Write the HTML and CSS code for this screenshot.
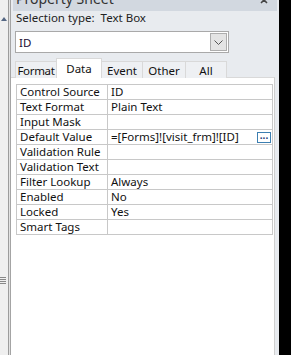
FILE: index.html
```html
<!DOCTYPE html>
<html lang="en">
<head>
    <meta charset="UTF-8">
    <title>Property Sheet</title>
    <link rel="stylesheet" href="styles.css">
</head>
<body>
    <div class="strip">
        <span class="arrow"></span>
        <span class="grip"><i></i><i></i><i></i><i></i></span>
    </div>
    <div class="edge"></div>
    <div class="sheet">
        <div class="titlebar">
            <span class="title">Property Sheet</span>
            <svg class="close" width="8" height="8" viewBox="0 0 8 8"><path d="M1 1 L7 7 M7 1 L1 7" stroke="#444" stroke-width="1.6"/></svg>
        </div>
        <div class="seltype">Selection type:&nbsp; Text Box</div>
        <div class="combo">
            <span class="combo-text">ID</span>
            <span class="drop"><svg width="9" height="5" viewBox="0 0 9 5"><path d="M0.5 0.5 L4.5 4.5 L8.5 0.5" fill="none" stroke="#555" stroke-width="1"/></svg></span>
        </div>
        <div class="tabs">
            <span class="tab tab-format">Format</span>
            <span class="tab tab-data active">Data</span>
            <span class="tab tab-event">Event</span>
            <span class="tab tab-other">Other</span>
            <span class="tab tab-all">All</span>
        </div>
        <div class="panel">
            <table class="grid">
                <tr><td class="name">Control Source</td><td>ID</td></tr>
                <tr><td class="name">Text Format</td><td>Plain Text</td></tr>
                <tr><td class="name">Input Mask</td><td></td></tr>
                <tr><td class="name">Default Value</td><td><div class="val"><span>=[Forms]![visit_frm]![ID]</span><span class="dots">...</span></div></td></tr>
                <tr><td class="name">Validation Rule</td><td></td></tr>
                <tr><td class="name">Validation Text</td><td></td></tr>
                <tr><td class="name">Filter Lookup</td><td>Always</td></tr>
                <tr><td class="name">Enabled</td><td>No</td></tr>
                <tr><td class="name">Locked</td><td>Yes</td></tr>
                <tr><td class="name">Smart Tags</td><td></td></tr>
            </table>
        </div>
    </div>
    <div class="void"></div>
</body>
</html>
```

FILE: styles.css
```css
body {
    margin: 0;
    height: 355px;
    overflow: hidden;
    display: flex;
    font-family: "Noto Sans", sans-serif;
    font-size: 11.5px;
    color: #111;
}
.strip {
    width: 8px;
    background: #efefef;
    display: flex;
    flex-direction: column;
    align-items: flex-start;
    padding-top: 17px;
    box-sizing: border-box;
}
.arrow {
    width: 0;
    height: 0;
    margin-left: 1px;
    border-left: 3px solid transparent;
    border-right: 3px solid transparent;
    border-bottom: 4px solid #556783;
}
.grip {
    margin-top: 256px;
    display: flex;
    flex-direction: column;
    gap: 1px;
}
.grip i {
    display: block;
    width: 6px;
    height: 1px;
    background: #888;
}
.edge {
    width: 1px;
    border-left: 1px solid #9c9c9c;
    border-right: 1px solid #a4a4a4;
    background: #e2e2e2;
}
.sheet {
    width: 268px;
    background: #e8ebef;
    display: flex;
    flex-direction: column;
}
.titlebar {
    height: 11px;
    margin: 0 2px;
    background: #d2d8e0;
    overflow: hidden;
    display: flex;
    justify-content: space-between;
}
.title {
    font-size: 14px;
    line-height: 14px;
    margin-top: -8px;
    margin-left: 3px;
    color: #333;
}
.close {
    margin-top: -4px;
    margin-right: 9px;
}
.seltype {
    height: 12px;
    line-height: 12px;
    margin-top: 1px;
    padding-left: 5px;
    color: #222;
}
.combo {
    margin: 7px 0 0 4px;
    width: 214px;
    height: 22px;
    box-sizing: border-box;
    border: 1px solid #a9a9a9;
    background: #fff;
    display: flex;
    align-items: center;
    justify-content: space-between;
}
.combo-text {
    padding-left: 3px;
    color: #1c0d33;
}
.drop {
    width: 17px;
    height: 18px;
    margin-right: 1px;
    box-sizing: border-box;
    border: 1px solid #adadad;
    background: #e4e4e4;
    display: flex;
    align-items: center;
    justify-content: center;
}
.tabs {
    margin: 5px 0 -1px 4px;
    display: flex;
    align-items: flex-end;
    position: relative;
}
.tab {
    height: 17px;
    box-sizing: border-box;
    border: 1px solid #d9d9d9;
    border-bottom: none;
    background: #eef0f3;
    text-align: center;
    line-height: 17px;
    white-space: nowrap;
}
.tab + .tab {
    border-left: none;
}
.tab-format { width: 42px; letter-spacing: -0.3px; }
.tab-data { width: 45px; }
.tab-event { width: 41px; }
.tab-other { width: 43px; }
.tab-all { width: 41px; }
.tab.active {
    height: 20px;
    background: #fff;
    line-height: 19px;
    border-left: 1px solid #d9d9d9;
    margin-left: -1px;
    width: 46px;
}
.tab.active + .tab {
    border-left: none;
}
.panel {
    flex: 1;
    margin-right: 4px;
    background: #fff;
    border-top: 1px solid #d9d9d9;
    border-right: 1px solid #cfcfcf;
    padding: 6px 0 0 5px;
}
.grid {
    border-collapse: collapse;
    width: 257px;
}
.grid td {
    border: 1px solid #c8c8c8;
    height: 14px;
    padding: 0 0 0 3px;
    line-height: 14px;
    white-space: nowrap;
}
.grid td.name {
    width: 87px;
}
.val {
    display: flex;
    align-items: center;
    justify-content: space-between;
}
.dots {
    width: 12px;
    height: 9px;
    margin-right: 1px;
    border: 1px solid #3c7fb1;
    font-size: 10px;
    line-height: 5px;
    text-align: center;
    color: #1e3c78;
    font-weight: bold;
}
.void {
    flex: 1;
    background: #000;
}
```
